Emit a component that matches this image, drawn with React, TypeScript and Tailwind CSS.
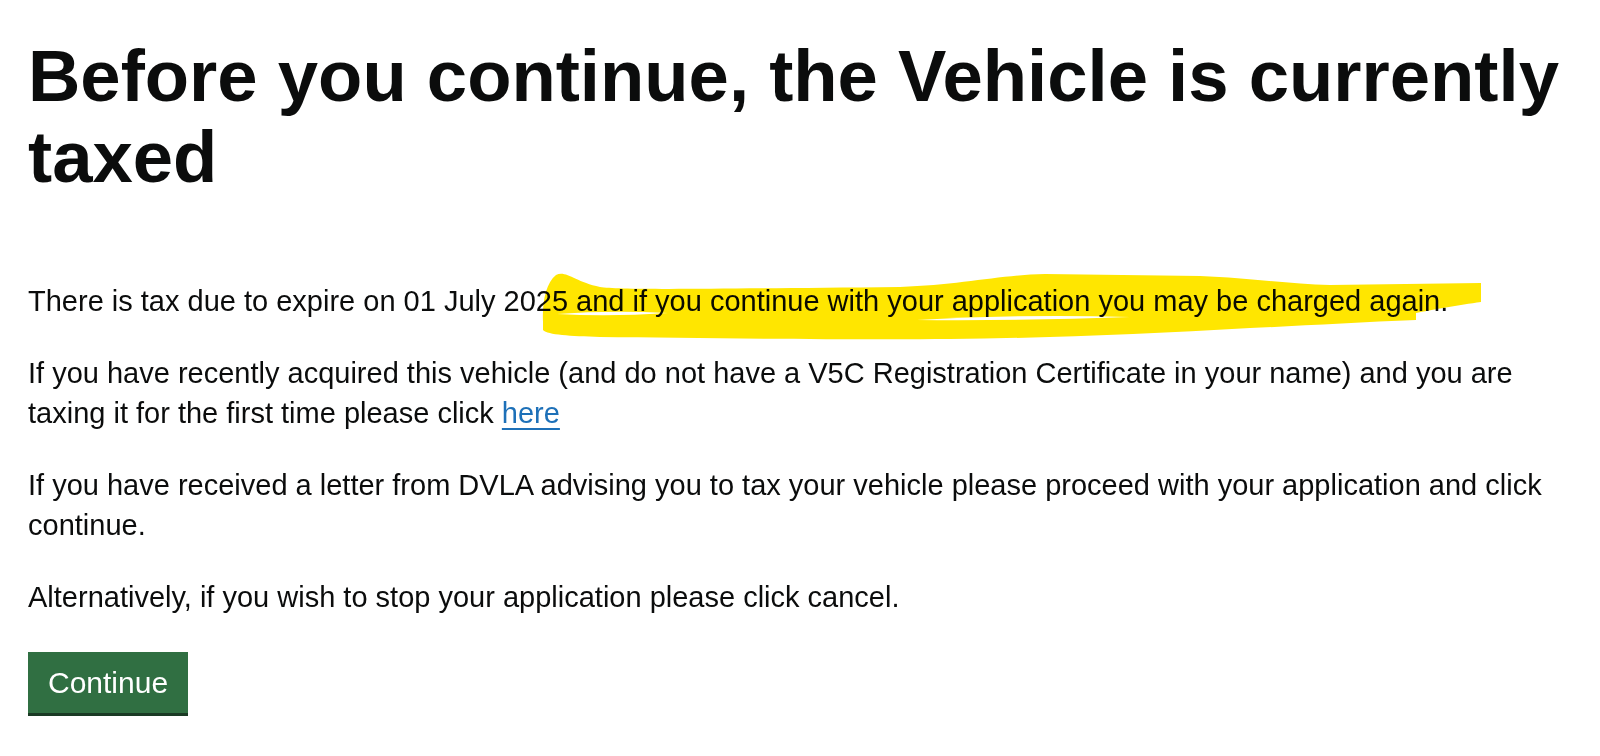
const Highlight = () => (
  <svg
    className="pointer-events-none absolute left-0 top-0 mix-blend-multiply"
    width="1600"
    height="756"
    viewBox="0 0 1600 756"
    aria-hidden="true"
  >
    <path
      fill="#ffe600"
      d="M 543 322 C 542 302, 546 283, 556 275 C 566 270, 575 282, 600 287 C 620 290, 700 289, 900 287 C 960 285, 1000 275, 1045 274 L 1200 276 C 1250 278, 1290 284, 1330 285 L 1481 283 L 1481 302 C 1460 305, 1430 310, 1416 313 L 1416 320 C 1360 322, 1300 326, 1250 328 C 1150 334, 1050 338, 950 339 C 850 340, 700 338, 600 337 C 570 336, 548 335, 543 330 Z"
    />
    <path fill="#ffffff" d="M 557 314 Q 610 310 668 313 Q 610 317 557 314 Z" />
    <path fill="#ffffff" d="M 917 320 Q 1020 314 1130 317 Q 1020 321 917 320 Z" />
  </svg>
)

export default function App() {
  return (
    <main className="relative min-h-[756px] w-full bg-white pl-[28px] pr-[8px] pt-[35px] text-[#0b0c0c] font-['Liberation_Sans',Arial,sans-serif]">
      <h1 className="mb-[84px] whitespace-nowrap text-[72.5px] font-bold leading-[81px]">
        Before you continue, the Vehicle is currently
        <br />
        taxed
      </h1>

      <div className="text-[29px] leading-[40px]">
        <p className="mb-[32px]">
          There is tax due to expire on 01 July 2025 and if you continue with your application you may be charged again.
        </p>
        <p className="mb-[32px]">
          If you have recently acquired this vehicle (and do not have a V5C Registration Certificate in your name) and you are
          <br />
          taxing it for the first time please click{" "}
          <a href="#" className="text-[#1d70b8] underline decoration-[2px] underline-offset-[5px]">
            here
          </a>
        </p>
        <p className="mb-[32px]">
          If you have received a letter from DVLA advising you to tax your vehicle please proceed with your application and click
          <br />
          continue.
        </p>
        <p className="mb-[35px]">Alternatively, if you wish to stop your application please click cancel.</p>
      </div>

      <button
        type="button"
        className="flex h-[61px] items-center bg-[#306f42] px-[20px] text-[30px] text-white shadow-[0_3px_0_#1a3a24]"
      >
        Continue
      </button>

      <Highlight />
    </main>
  )
}
